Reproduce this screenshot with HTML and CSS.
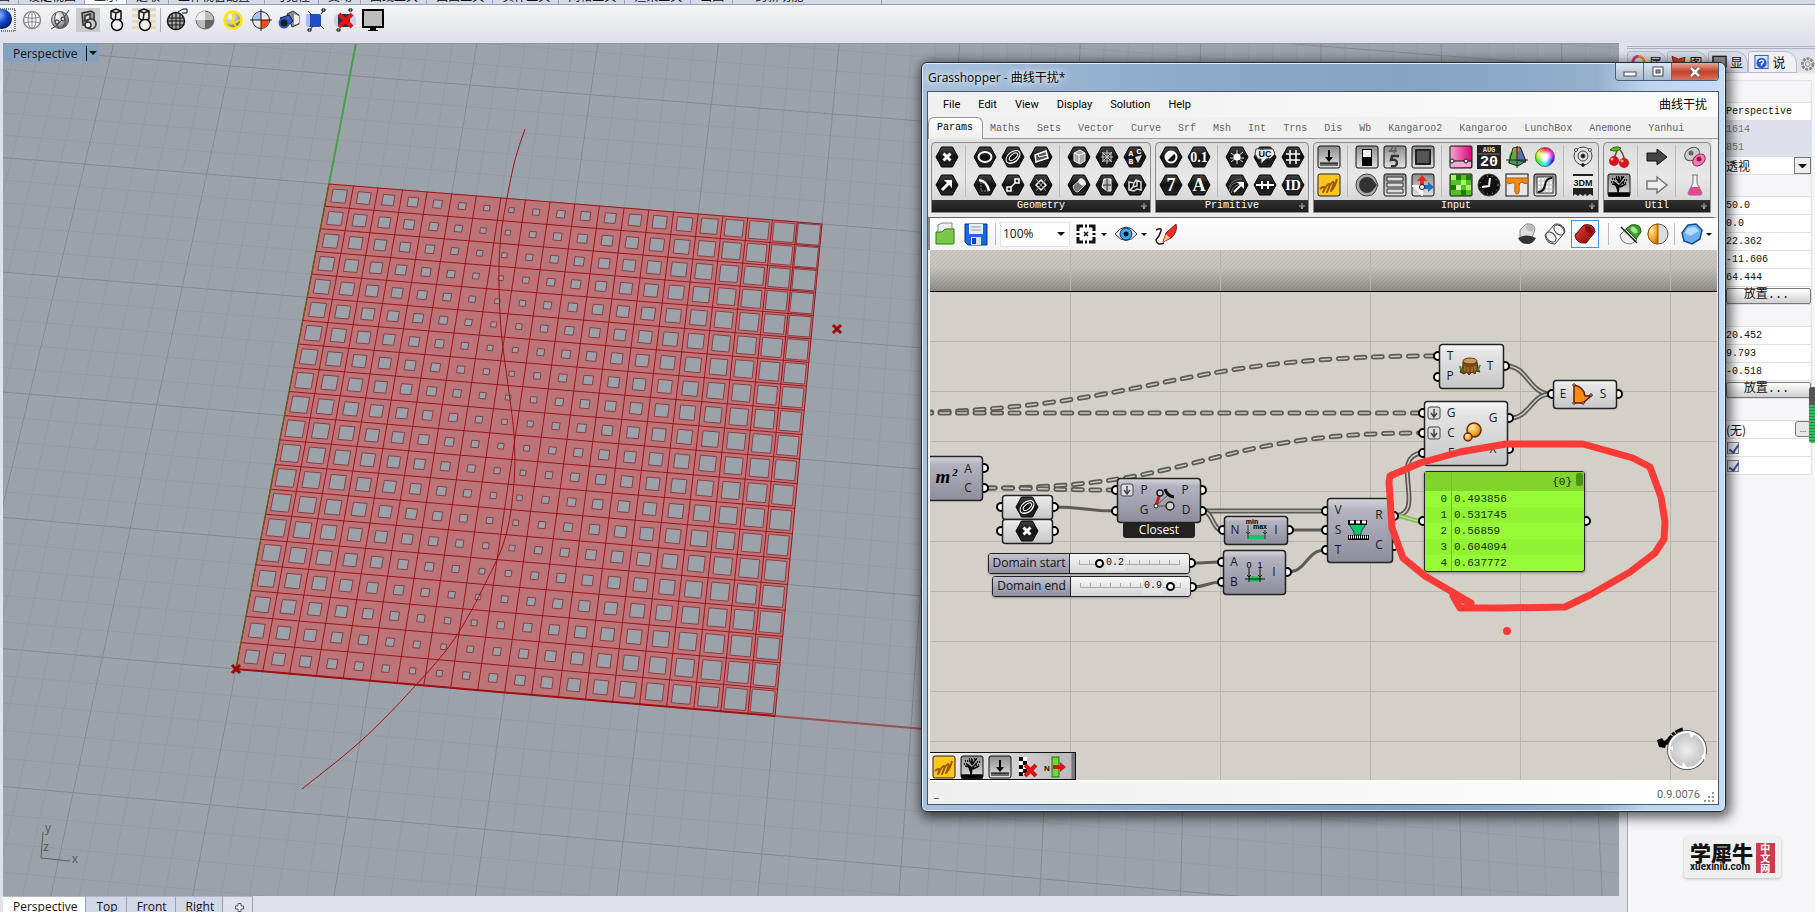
FILE: index.html
```html
<!DOCTYPE html>
<html lang="zh">
<head>
<meta charset="utf-8">
<title>Grasshopper - 曲线干扰</title>
<link rel="stylesheet" href="styles.css">
</head>
<body>
<svg class="defs" width="0" height="0" aria-hidden="true">
  <defs>
    <linearGradient id="gHex" x1="0" y1="0" x2="0" y2="1"><stop offset="0" stop-color="#444"/><stop offset=".5" stop-color="#111"/><stop offset="1" stop-color="#262626"/></linearGradient>
    <linearGradient id="gTile" x1="0" y1="0" x2="0" y2="1"><stop offset="0" stop-color="#8c8c8c"/><stop offset="1" stop-color="#e2e2e2"/></linearGradient>
    <linearGradient id="gPink" x1="0" y1="0" x2="1" y2="0"><stop offset="0" stop-color="#f6a6d0"/><stop offset="1" stop-color="#e0007c"/></linearGradient>
    <linearGradient id="gRed" x1="0" y1="0" x2="1" y2="1"><stop offset="0" stop-color="#f0453a"/><stop offset="1" stop-color="#7d0000"/></linearGradient>
    <radialGradient id="gBall" cx=".35" cy=".3" r=".8"><stop offset="0" stop-color="#fff"/><stop offset=".6" stop-color="#a8a8a8"/><stop offset="1" stop-color="#444"/></radialGradient>
    <radialGradient id="gDial"><stop offset="0" stop-color="#eee"/><stop offset="1" stop-color="#c2c2c2"/></radialGradient>
    <radialGradient id="gBlue" cx=".35" cy=".3" r=".8"><stop offset="0" stop-color="#9fc4ff"/><stop offset=".5" stop-color="#1248d0"/><stop offset="1" stop-color="#04124a"/></radialGradient>
    <radialGradient id="gOrange" cx=".35" cy=".3" r=".8"><stop offset="0" stop-color="#ffe9b0"/><stop offset=".6" stop-color="#f2a92c"/><stop offset="1" stop-color="#b36a00"/></radialGradient>
    <linearGradient id="gLight" x1="0" y1="0" x2="0" y2="1"><stop offset="0" stop-color="#fcfcfc"/><stop offset=".15" stop-color="#e6e6e6"/><stop offset="1" stop-color="#c6c6c6"/></linearGradient>
    <linearGradient id="gDark" x1="0" y1="0" x2="0" y2="1"><stop offset="0" stop-color="#d6d6de"/><stop offset=".18" stop-color="#b3b3c0"/><stop offset="1" stop-color="#8d8c9b"/></linearGradient>
    <symbol id="hex" viewBox="0 0 24 24"><path d="M6.500 2h11l5.500 10-5.500 10h-11L1 12z" fill="url(#gHex)" stroke="#000"/></symbol>
    <symbol id="tile" viewBox="0 0 24 24"><rect x="1" y="1" width="22" height="22" rx="2" fill="url(#gTile)" stroke="#111"/></symbol>
    <symbol id="cross" viewBox="0 0 24 24"><path d="M8.500 8.500l7 7M15.500 8.500l-7 7" stroke="#fff" stroke-width="3"/></symbol>
    <symbol id="loop" viewBox="0 0 24 24"><g fill="none" stroke="#fff" transform="rotate(-40 12 12)"><ellipse cx="12" cy="12" rx="8" ry="5"/><ellipse cx="12.500" cy="12" rx="5" ry="2.500"/><path d="M5 14q6 6 13 1"/></g></symbol>
    <symbol id="bake" viewBox="0 0 24 24"><use href="#tile"/><path d="M11 5h2v7h3l-4 5-4-5h3z"/><path d="M3 18h18M4 18v3m2-3v3m2-3v3m2-3v3m2-3v3m2-3v3m2-3v3m2-3v3m2-3v3" stroke="#000"/></symbol>
    <symbol id="scribble" viewBox="0 0 24 24"><rect x="1" y="1" width="22" height="22" rx="2" fill="#ffc61c" stroke="#222"/><path d="M3 16q3-3 4-2t-1 5q4-8 6-8t-2 8q4-10 6-10t-2 9q4-4 6-12" fill="none" stroke="#9a5a00" stroke-width="2" stroke-linejoin="round"/></symbol>
    <symbol id="tree" viewBox="0 0 24 24"><use href="#tile"/><path d="M2 20h20v3H2zM11 20l1-7-5-4m5 4l5-5m-5 2V4m0 5L9 5m3 5l4-6M5 11l5 1M19 11l-6 3" fill="#000" stroke="#000" stroke-width="1.500"/><path d="M4 9h3M5 6h4M9 4h3M14 4h4M17 7h4M16 10h4" stroke="#111" stroke-width="2" stroke-dasharray="1 1"/></symbol>
    <symbol id="down" viewBox="0 0 14 14"><rect x="1" y="1" width="12" height="12" rx="2" fill="#dcdce0" stroke="#444"/><path d="M7 3v8M4 7l3 4 3-4" fill="none" stroke="#444" stroke-width="1.500"/></symbol>
    <symbol id="plus" viewBox="0 0 8 8"><path d="M4 1v6M1 4h6M3 5l1 2 1-2" stroke="#aaa" fill="none"/></symbol>
    <symbol id="gear" viewBox="0 0 16 16"><circle cx="8" cy="8" r="5.500" fill="#eee" stroke="#888" stroke-width="3" stroke-dasharray="3 1"/><circle cx="8" cy="8" r="2.500" fill="#e2e4ec" stroke="#888"/></symbol>
  </defs>
</svg>

<div class="app">
  <nav class="tabstrip">
    <a href="#">视图</a><a href="#">设定视图</a><a href="#" class="on">显示</a><a href="#">选取</a><a href="#" class="mid6">工作视窗配置</a><a href="#">可见性</a><a href="#">变动</a><a href="#">曲线工具</a><a href="#">曲面工具</a><a href="#">实体工具</a><a href="#">网格工具</a><a href="#">渲染工具</a><a href="#">出图</a><a href="#" class="wide">的新功能</a>
  </nav>
  <div class="toolbar">
    <button aria-label="渲染"><svg viewBox="0 0 24 24"><path d="M0 1h23v22H0" fill="none" stroke="#777" stroke-width="2" stroke-dasharray="1 1"/><circle cx="10" cy="11" r="10" fill="url(#gBlue)"/></svg></button>
    <button aria-label="线框"><svg viewBox="0 0 24 24" fill="none" stroke="#888"><circle cx="12" cy="12" r="8.500" fill="#f4f4f4" stroke-width="1.500"/><ellipse cx="12" cy="12" rx="4" ry="8.500"/><path d="M4 9q8 3 16 0M4 15q8-3 16 0M12 3v18"/></svg></button>
    <button aria-label="着色"><svg viewBox="0 0 24 24"><circle cx="12" cy="12" r="8.500" fill="url(#gBall)" stroke="#555"/><path d="M3 21Q12 17 21 2M8 5q-4 8 3 15M14 4q6 8 1 15" fill="none" stroke="#444"/><circle cx="9" cy="14" r="2" fill="#ddd" stroke="#222"/><circle cx="15" cy="11" r="2" fill="#ddd" stroke="#222"/></svg></button>
    <button aria-label="半透明" class="pressed"><svg viewBox="0 0 24 24" fill="#999" stroke="#333" stroke-width="1.500"><path d="M6 5l9-2 3 2v8l-3 4H7z"/><path d="M9 8l5-2v5l-5 2z" fill="#ddd"/><circle cx="15" cy="16" r="5" fill="#ccc"/><circle cx="12" cy="17" r="3" fill="#eee"/></svg></button>
    <button aria-label="工程图"><svg viewBox="0 0 24 24" fill="#eee" stroke="#111" stroke-width="1.500"><path d="M7 3l5-2 5 2v8l-6 2-4-3zM7 3l5 2 5-2M12 5l-1 8"/><circle cx="13" cy="17" r="5.500"/></svg></button>
    <button aria-label="艺术风格" class="paper"><svg viewBox="0 0 24 24" fill="#eee" stroke="#111" stroke-width="1.500"><path d="M7 3l5-2 5 2v8l-6 2-4-3zM7 3l5 2 5-2M12 5l-1 8"/><circle cx="13" cy="17" r="5.500"/></svg></button>
    <i class="vsep"></i>
    <button aria-label="网格球"><svg viewBox="0 0 24 24" fill="none" stroke="#111"><circle cx="11" cy="13" r="8.500" fill="#aaa" stroke-width="1.500"/><path d="M3 10h16M3 13h17M4 17h14M7 6v14M11 5v17M15 6v15M13 4l5-3h4v4h-5"/></svg></button>
    <button aria-label="平坦着色"><svg viewBox="0 0 24 24"><circle cx="12" cy="12" r="9" fill="#bbb" stroke="#666"/><path d="M12 3v9H3a9 9 0 0 1 9-9z" fill="#eee"/><path d="M12 21v-9h9a9 9 0 0 1-9 9z" fill="#666"/></svg></button>
    <button aria-label="着色选取"><svg viewBox="0 0 24 24"><circle cx="12" cy="12" r="8.500" fill="url(#gBall)" stroke="#ffe600" stroke-width="2.500"/><path d="M13 3q-4 9 3 17M4 14q9 3 16-3" stroke="#ffe600" fill="none" stroke-width="1.500"/></svg></button>
    <button aria-label="斑马纹"><svg viewBox="0 0 24 24"><circle cx="12" cy="12" r="8.500" fill="#e8e8e8" stroke="#222"/><path d="M12 12V4a8 8 0 0 0-8 8z" fill="#9cc4ff"/><path d="M12 12v8a8 8 0 0 0 8-8z" fill="#ff4a10"/><path d="M12 1v22M1 12h22" stroke="#411"/></svg></button>
    <button aria-label="相机"><svg viewBox="0 0 24 24"><path d="M10 6l6-3 6 4v9l-7 3z" fill="#889" stroke="#333"/><path d="M17 6l5 2v7l-5 2z" fill="#eee"/><path d="M3 10l9-3 4 6-7 6z" fill="#3c5fc0" stroke="#114"/><circle cx="7" cy="15" r="4.500" fill="#122" stroke="#3558c0" stroke-width="2"/></svg></button>
    <button aria-label="截平面"><svg viewBox="0 0 24 24"><rect x="1" y="6" width="22" height="13" rx="5" fill="#e4eaf6"/><rect x="3" y="6" width="13" height="13" rx="2" fill="#204cc8"/><rect x="1" y="6" width="4" height="13" rx="2" fill="#a8bcf0"/><path d="M5 22l3-4M16 6l3-4M3 3l4 4M15 17l4 4" stroke="#222"/><path d="M3 21h3v2H3zM17 1h3v2h-3z" fill="#fff" stroke="#000"/></svg></button>
    <button aria-label="停用截平面"><svg viewBox="0 0 24 24"><rect x="1" y="6" width="22" height="13" rx="5" fill="#c8d0e4"/><rect x="5" y="6" width="12" height="13" rx="2" fill="#27304c"/><path d="M6 6l13 13M19 6L6 19" stroke="#ec1010" stroke-width="4"/><path d="M4 21h3v2H4zM16 1h3v2h-3z" fill="#fff" stroke="#000"/></svg></button>
    <button aria-label="屏幕"><svg viewBox="0 0 24 24"><rect x="2" y="2" width="20" height="17" fill="#bdbdbd" stroke="#000" stroke-width="2"/><path d="M9 20h6v2H9zM7 22h10v1H7z"/></svg></button>
  </div>

  <div class="main">
    <div class="work">
      <div class="viewport">
        <svg class="scene" id="scene" aria-label="Perspective"></svg>
        <button class="vlabel">Perspective<i class="bar"></i><i class="tri"></i></button>
      </div>
      <nav class="vtabs"><a href="#" class="on">Perspective</a><a href="#">Top</a><a href="#">Front</a><a href="#">Right</a><a href="#" class="add" aria-label="新增"><svg viewBox="0 0 9 9"><path d="M3 0.500h3V3h2.500v3H6v2.500H3V6H.5V3H3z" fill="#fff" stroke="#555"/></svg></a></nav>
    </div>

    <aside class="side">
      <nav class="ptabs">
        <a href="#"><svg viewBox="0 0 16 16"><circle cx="8" cy="8" r="6" fill="none" stroke="#e89020" stroke-width="3"/><path d="M2 8a6 6 0 0 1 6-6" stroke="#d03a8c" stroke-width="3" fill="none"/><path d="M14 8a6 6 0 0 1-6 6" stroke="#3a8c2c" stroke-width="3" fill="none"/></svg>属</a>
        <a href="#"><svg viewBox="0 0 16 16"><path d="M1 2l7 3 7-2-2 10-9 1z" fill="#e6400c" stroke="#801c00"/></svg>图</a>
        <a href="#"><svg viewBox="0 0 16 16"><rect x="1" y="2" width="14" height="11" fill="#999" stroke="#222" stroke-width="1.500"/></svg>显</a>
        <a href="#" class="on"><svg viewBox="0 0 16 16"><rect x="1" y="1" width="14" height="14" fill="#dde8ff" stroke="#3355aa"/><circle cx="8" cy="9" r="5.500" fill="#2458d8"/><path d="M6 8q0-2 2-2t2 2q0 1-2 2v2" stroke="#fff" fill="none" stroke-width="1.500"/></svg>说</a>
        <svg class="cog" viewBox="0 0 16 16"><use href="#gear"/></svg>
      </nav>
      <div class="pbody">
        <table class="props">
          <tr class="sec"><td></td></tr>
          <tr><td>Perspective</td></tr>
          <tr class="ro"><td>1614</td></tr>
          <tr class="ro"><td>851</td></tr>
          <tr><td><div class="drop"><select aria-label="投影"><option>透视</option></select><i></i></div></td></tr>
          <tr class="sec"><td></td></tr>
          <tr><td>50.0</td></tr><tr><td>0.0</td></tr><tr><td>22.362</td></tr><tr><td>-11.606</td></tr><tr><td>64.444</td></tr>
          <tr><td><button class="place">放置...</button></td></tr>
          <tr class="sec"><td></td></tr>
          <tr><td>20.452</td></tr><tr><td>9.793</td></tr><tr><td>-0.518</td></tr>
          <tr><td><button class="place">放置...</button></td></tr>
          <tr class="sec"><td></td></tr>
          <tr><td><div class="file"><span>(无)</span><button aria-label="浏览">...</button></div></td></tr>
          <tr><td><input type="checkbox" aria-label="显示" checked></td></tr>
          <tr><td><input type="checkbox" aria-label="灰阶" checked></td></tr>
        </table>
        <div class="mark">
          <div><b>学犀牛</b><span>xuexiniu.com</span></div>
          <em>中文网</em>
        </div>
      </div>
    </aside>
  </div>

  <i class="meter"></i>

  <section class="window">
    <header class="title"><h1>Grasshopper - <span>曲线干扰</span>*</h1>
      <div class="wbtns"><button aria-label="最小化"><svg viewBox="0 0 14 12"><rect x="1" y="6" width="12" height="4" fill="#fff" stroke="#445"/></svg></button><button aria-label="最大化"><svg viewBox="0 0 14 12"><rect x="2" y="1" width="10" height="9" fill="#fff" stroke="#445"/><rect x="5" y="4" width="4" height="3" fill="#89a" stroke="#445"/></svg></button><button class="close" aria-label="关闭"><svg viewBox="0 0 14 12"><path d="M3 2l8 8M11 2l-8 8" stroke="#544" stroke-width="4"/><path d="M3 2l8 8M11 2l-8 8" stroke="#fff" stroke-width="2.500"/></svg></button></div>
    </header>
    <div class="inner">
      <nav class="menu"><a href="#">File</a><a href="#">Edit</a><a href="#">View</a><a href="#">Display</a><a href="#">Solution</a><a href="#">Help</a><span>曲线干扰</span></nav>
      <nav class="gtabs"><a href="#" class="on">Params</a><a href="#">Maths</a><a href="#">Sets</a><a href="#">Vector</a><a href="#">Curve</a><a href="#">Srf</a><a href="#">Msh</a><a href="#">Int</a><a href="#">Trns</a><a href="#">Dis</a><a href="#">Wb</a><a href="#">Kangaroo2</a><a href="#">Kangaroo</a><a href="#">LunchBox</a><a href="#">Anemone</a><a href="#">Yanhui</a></nav>
      <div class="ribbon">
        <div class="group">
          <div class="icons">
            <div>
              <svg viewBox="0 0 24 24"><use href="#hex"/><use href="#cross"/></svg>
              <svg viewBox="0 0 24 24"><use href="#hex"/><path d="M7 17l7-7" stroke="#fff" stroke-width="3"/><path d="M9 7h8v8z" fill="#fff"/></svg>
            </div>
            <div>
              <svg viewBox="0 0 24 24"><use href="#hex"/><ellipse cx="12" cy="12" rx="6.500" ry="5" fill="none" stroke="#fff" stroke-width="2"/></svg>
              <svg viewBox="0 0 24 24"><use href="#hex"/><path d="M6 7q8 1 10 11" fill="none" stroke="#fff" stroke-width="2.500"/><path d="M8 9v9h8" fill="none" stroke="#888" stroke-dasharray="2 1"/></svg>
              <svg viewBox="0 0 24 24"><use href="#hex"/><use href="#loop"/></svg>
              <svg viewBox="0 0 24 24"><use href="#hex"/><path d="M8 16l8-8" stroke="#fff" stroke-width="1.500"/><path d="M14 6h4v4h-4zM6 14h4v4H6z" stroke="#fff" fill="#222" stroke-width="1.500"/></svg>
              <svg viewBox="0 0 24 24"><use href="#hex"/><path d="M6 10l11-4 2 7-12 4z" fill="#555" stroke="#fff" stroke-width="1.500"/><path d="M9 9l1 3 8-2" stroke="#fff" fill="none"/></svg>
              <svg viewBox="0 0 24 24"><use href="#hex"/><path d="M12 7l5 5-5 5-5-5z" fill="none" stroke="#fff" stroke-width="1.500"/><path d="M7 6l10 12M17 6L7 18" stroke="#999"/></svg>
            </div>
            <div>
              <svg viewBox="0 0 24 24"><use href="#hex"/><path d="M7 8l6-3 5 3v8l-5 3-6-3z" fill="#aaa" stroke="#eee"/><path d="M7 8l5 2 6-2M12 10v8" stroke="#fff" fill="none"/></svg>
              <svg viewBox="0 0 24 24"><use href="#hex"/><path d="M6 13l8-7 5 5-8 8q-4 0-5-6z" fill="#777" stroke="#ccc"/><ellipse cx="15" cy="9" rx="4" ry="3" transform="rotate(40 15 9)" fill="#eee"/></svg>
              <svg viewBox="0 0 24 24"><use href="#hex"/><path d="M6 12h12M12 5v14M7 7l10 10M17 7L7 17M8 8h8v8H8z" stroke="#ccc" fill="none"/></svg>
              <svg viewBox="0 0 24 24"><use href="#hex"/><path d="M9 6h7v12h-4l-5-4z" fill="#bbb" stroke="#fff"/><path d="M8 12h8M12 6v12" stroke="#333"/></svg>
              <svg viewBox="0 0 24 24"><use href="#hex"/><path d="M12 12l7-2-4 8z" fill="#ddd"/><text x="8" y="11" class="tiny">A</text><text x="16" y="9" class="tiny">C</text><text x="8" y="19" class="tiny">B</text></svg>
              <svg viewBox="0 0 24 24"><use href="#hex"/><path d="M6 9l5 1 2-3 5 2v8l-4-1-3 2-5-1zM11 10l-1 4 4-1v-5M10 14l-3 3" fill="none" stroke="#ddd" stroke-width="1.500"/></svg>
            </div>
          </div>
          <div class="gname">Geometry<svg viewBox="0 0 8 8"><use href="#plus"/></svg></div>
        </div>
        <div class="group">
          <div class="icons">
            <div>
              <svg viewBox="0 0 24 24"><use href="#hex"/><circle cx="12" cy="12" r="5.500" fill="#111" stroke="#fff" stroke-width="2"/><path d="M8 16A5.500 5.500 0 0 1 16 8z" fill="#fff"/></svg>
              <svg viewBox="0 0 24 24"><use href="#hex"/><text x="12" y="18" class="big">7</text></svg>
              <svg viewBox="0 0 24 24"><use href="#hex"/><text x="12" y="17" class="mid">0.1</text></svg>
              <svg viewBox="0 0 24 24"><use href="#hex"/><text x="12" y="18" class="big">A</text></svg>
            </div>
            <div>
              <svg viewBox="0 0 24 24"><use href="#hex"/><path d="M12 5v14M6 8l12 9M18 7L6 17M5 13h14" stroke="#ddd"/><circle cx="12" cy="12" r="3.500" fill="#fff"/></svg>
              <svg viewBox="0 0 24 24"><use href="#hex"/><path d="M4 14q3-8 13-8M4 18q2-10 13-9M6 20q2-9 12-9" fill="none" stroke="#777"/><path d="M9 19l7-7" stroke="#fff" stroke-width="2"/><path d="M12 9h7v7z" fill="#fff"/></svg>
              <svg viewBox="0 0 24 24"><use href="#hex"/><path d="M3 4h17l2 5-5 5h-4l-5 5v-5H5L2 9z" fill="#eee" stroke="#444"/><text x="12" y="12" class="lab">ÜÇ</text></svg>
              <svg viewBox="0 0 24 24"><use href="#hex"/><path d="M3 12h18M9 8v8M15 8v8" stroke="#fff" stroke-width="2"/></svg>
              <svg viewBox="0 0 24 24"><use href="#hex"/><path d="M9 5v14M15 5v14M5 9h14M5 15h14" stroke="#fff" stroke-width="1.500"/></svg>
              <svg viewBox="0 0 24 24"><use href="#hex"/><text x="12" y="17" class="mid">ID</text></svg>
            </div>
          </div>
          <div class="gname">Primitive<svg viewBox="0 0 8 8"><use href="#plus"/></svg></div>
        </div>
        <div class="group">
          <div class="icons">
            <div>
              <svg viewBox="0 0 24 24"><use href="#bake"/></svg>
              <svg viewBox="0 0 24 24"><use href="#scribble"/></svg>
            </div>
            <div>
              <svg viewBox="0 0 24 24"><use href="#tile"/><rect x="7" y="4" width="10" height="17"/><rect x="8" y="5" width="8" height="7" fill="#eee"/></svg>
              <svg viewBox="0 0 24 24"><path d="M12 1a11 11 0 1 0 0 22q5 0 8-4l3-7-3-7q-3-4-8-4z" fill="#aaa" stroke="#444"/><path d="M12 4a8 8 0 1 0 0 16q4 0 6-3l4-5-4-5q-2-3-6-3z" fill="#333"/></svg>
              <svg viewBox="0 0 24 24"><use href="#tile"/><path d="M10 2L7 6h7M13 2l-2 6" stroke="#666" stroke-width="2" fill="none"/><path d="M16 11H9l-1 4q6-1 6 3t-6 3" stroke="#333" stroke-width="2.500" fill="none"/></svg>
              <svg viewBox="0 0 24 24"><use href="#tile"/><path d="M4 4h16v4H4zM4 10h16v4H4zM4 16h16v4H4z" fill="#ddd" stroke="#333"/></svg>
              <svg viewBox="0 0 24 24"><use href="#tile"/><rect x="4" y="4" width="16" height="16" rx="1" fill="#222"/><rect x="6" y="6" width="12" height="12" fill="#555"/></svg>
              <svg viewBox="0 0 24 24"><use href="#tile"/><path d="M1 13h10v10" fill="#eee" stroke="#fff" stroke-width="2"/><path d="M11 12V7" stroke="#e03018" stroke-width="4"/><path d="M6 8l5-6 5 6z" fill="#e03018"/><path d="M13 14h5" stroke="#1770d0" stroke-width="4"/><path d="M17 9l6 5-6 5z" fill="#1770d0"/><circle cx="11" cy="14" r="2.500" fill="#fff" stroke="#111"/></svg>
            </div>
            <div>
              <svg viewBox="0 0 24 24"><rect x="1" y="1" width="22" height="22" rx="1" fill="url(#gPink)" stroke="#111"/><path d="M2 16h20v6H2z" fill="#f7a8d2"/><path d="M1 16h22" stroke="#111"/><circle cx="3" cy="16" r="2" fill="#fff" stroke="#111"/><circle cx="17" cy="16" r="2" fill="#fff" stroke="#111"/></svg>
              <svg viewBox="0 0 24 24"><rect x="1" y="1" width="22" height="22" rx="1" fill="#4fc41a" stroke="#111"/><path d="M2 2h5v5H2zM12 7h5v5h-5zM17 12h5v5h-5z" fill="#a8f070"/><path d="M7 2h5v5H7zM17 2h5v5h-5zM2 12h5v5H2zM12 17h5v5h-5z" fill="#1d7a0a"/><path d="M7 12h5v5H7z" fill="#dcffc0"/></svg>
              <svg viewBox="0 0 24 24"><rect width="24" height="24" fill="#222"/><path d="M1 9h22" stroke="#777"/><text x="12" y="7" class="aug">AUG</text><text x="12" y="21" class="day">20</text></svg>
              <svg viewBox="0 0 24 24"><circle cx="12" cy="12" r="11" fill="#111" stroke="#444"/><circle cx="12" cy="12" r="9" fill="none" stroke="#bbb" stroke-dasharray="1 4"/><path d="M13 5l-1 8-7 1" fill="none" stroke="#fff" stroke-width="2"/></svg>
              <svg viewBox="0 0 24 24"><path d="M5 8l7-4v17l-9-3z" fill="#58b040"/><path d="M8 4l8-2 5 14-7 4z" fill="#c08040"/><path d="M12 6l5-1 4 12-8 3z" fill="#5a70b8"/><path d="M3 17l9-3 8 3-7 4z" fill="#3f9a60"/><path d="M8 3l7-1 6 14-8 5-9-3zM12 1v22M1 15h22M12 15l9 2" stroke="#222" fill="none"/></svg>
              <svg viewBox="0 0 24 24"><rect x="1" y="1" width="22" height="22" fill="#e8e8e8" stroke="#111"/><path d="M1 5h22v5q-3 2-6-1-3 0-3 4 1 8-2 8t-2-8q0-4-3-3-4 2-6-1z" fill="#f08a10" stroke="#b05a00"/></svg>
              <i class="wheel"></i>
              <svg viewBox="0 0 24 24"><use href="#tile"/><rect x="4" y="4" width="16" height="16" fill="#f4f4f4" stroke="#333"/><path d="M8 4v16M12 4v16M16 4v16M4 8h16M4 12h16M4 16h16" stroke="#bbb"/><path d="M5 19q6 0 7-7t7-7" fill="none" stroke="#111" stroke-width="2"/></svg>
            </div>
            <div>
              <svg viewBox="0 0 24 24" fill="none" stroke="#444"><circle cx="12" cy="11" r="9"/><circle cx="12" cy="11" r="5"/><circle cx="12" cy="11" r="2" fill="#111"/><circle cx="5" cy="5" r="1.500" fill="#fff"/><circle cx="19" cy="5" r="1.500" fill="#fff"/><circle cx="12" cy="20" r="1.500" fill="#111"/></svg>
              <svg viewBox="0 0 24 24"><path d="M2 1h20v22l-3-2-3 2-2-2-2 2-3-2-2 2-3-2-2 2z" fill="#222"/><rect x="2" y="3" width="20" height="12" fill="#eee"/><text x="12" y="13" class="dm">3DM</text></svg>
            </div>
          </div>
          <div class="gname">Input<svg viewBox="0 0 8 8"><use href="#plus"/></svg></div>
        </div>
        <div class="group">
          <div class="icons">
            <div>
              <svg viewBox="0 0 24 24"><path d="M11 3Q9 9 7 13M11 3q6 5 6 12" fill="none" stroke="#6a4a10" stroke-width="1.500"/><path d="M3 5q5-5 11-2-4 5-11 2z" fill="#58b82a" stroke="#2a6a10"/><circle cx="7" cy="16" r="5" fill="#d81020"/><circle cx="17" cy="18" r="5" fill="#d81020"/><circle cx="5" cy="14" r="1.500" fill="#ffb0b0"/><circle cx="15" cy="16" r="1.500" fill="#ffb0b0"/></svg>
              <svg viewBox="0 0 24 24"><use href="#tree"/></svg>
            </div>
            <div>
              <svg viewBox="0 0 24 24"><path d="M2 8h10V4l10 8-10 8v-4H2z" fill="#444" stroke="#111"/></svg>
              <svg viewBox="0 0 24 24"><path d="M2 8h10V4l10 8-10 8v-4H2z" fill="#eee" stroke="#777" stroke-width="1.500"/></svg>
            </div>
            <div>
              <svg viewBox="0 0 24 24"><ellipse cx="9" cy="9" rx="8" ry="6" transform="rotate(-35 9 9)" fill="#ccc" stroke="#555"/><circle cx="8" cy="8" r="2.500" fill="#666"/><ellipse cx="16" cy="15" rx="7" ry="5" transform="rotate(-40 16 15)" fill="#f080b0" stroke="#a02060"/><circle cx="16" cy="14" r="2.500" fill="#a01050"/></svg>
              <svg viewBox="0 0 24 24"><path d="M9 2h6M10 2v8L5 20q0 2 2 2h10q2 0 2-2L14 10V2" fill="#f4f4f4" stroke="#777"/><path d="M8 14h8l3 6q0 2-2 2H7q-2 0-2-2z" fill="#e04890"/></svg>
            </div>
          </div>
          <div class="gname">Util<svg viewBox="0 0 8 8"><use href="#plus"/></svg></div>
        </div>
      </div>
      <div class="ctools">
        <button aria-label="打开"><svg viewBox="0 0 24 24"><path d="M5 3l4-2h10v12H5z" fill="#eee" stroke="#888"/><path d="M3 10h6l3-3h9v14q0 1-1 1H3z" fill="#7cc84a" stroke="#2c7a10"/></svg></button>
        <button aria-label="保存" class="save"><svg viewBox="0 0 24 24"><path d="M1 2h22v21H4l-3-3z" fill="#1c68e0" stroke="#0a2c80"/><path d="M5 2h14v10H5z" fill="#e8eef6"/><path d="M7 5h10M7 8h10" stroke="#999"/><path d="M7 15h10v8H7z" fill="#ddd"/><path d="M8 16h4v6H8z" fill="#1448a8"/></svg></button>
        <i class="sp first"></i>
        <div class="zoomsel"><select aria-label="缩放"><option>100%</option></select><i></i></div>
        <button aria-label="缩放范围" class="dd"><svg viewBox="0 0 24 24"><path d="M4 9V4h5M15 4h5v5M20 15v5h-5M9 20H4v-5M11 4h2M11 20h2M4 11v2M20 11v2" fill="none" stroke="#111" stroke-width="3"/><path d="M10 10l4 4M14 10l-4 4" stroke="#111" stroke-width="1.500"/></svg></button>
        <button aria-label="命名视图" class="dd"><svg viewBox="0 0 24 24"><path d="M1 12q11-14 22 0-11 13-22 0z" fill="#f4f8fa" stroke="#333"/><circle cx="12" cy="12" r="6" fill="#3cace8" stroke="#125"/><circle cx="12" cy="12" r="2.500" fill="#012"/></svg></button>
        <button aria-label="草图"><svg viewBox="0 0 24 24"><path d="M2 8q6-3 5 1t-5 9q1 6 8 3" fill="none" stroke="#3a1010" stroke-width="1.500"/><path d="M9 20l3-9L22 2q2 8-5 14z" fill="#e83028" stroke="#8a1010"/><path d="M9 20l3-8 4 4z" fill="#f2c080"/></svg></button>
        <span class="grow"></span>
        <button aria-label="不预览"><svg viewBox="0 0 24 24"><path d="M5 8l6-6q8-1 9 5l-3 9-6 3-6-3z" fill="#ddd" stroke="#888"/><ellipse cx="15" cy="6" rx="4" ry="3" transform="rotate(30 15 6)" fill="#bbb"/><path d="M3 16q9-5 18 0-3 6-9 6t-9-6z" fill="#333"/></svg></button>
        <button aria-label="线框预览"><svg viewBox="0 0 24 24" fill="#f4f4f4" stroke="#444"><path d="M2 13L12 2q9-1 10 8L12 22Q3 22 2 13z"/><ellipse cx="16" cy="8" rx="6" ry="4" transform="rotate(45 16 8)"/><ellipse cx="8" cy="15" rx="6" ry="4" transform="rotate(45 8 15)"/></svg></button>
        <button aria-label="着色预览" class="sel"><svg viewBox="0 0 24 24"><path d="M2 13L11 3q10-2 11 7L13 21Q3 22 2 13z" fill="url(#gRed)" stroke="#500"/><ellipse cx="16" cy="8" rx="5" ry="3" transform="rotate(45 16 8)" fill="#8a0c08"/></svg></button>
        <i class="sp far"></i>
        <button aria-label="仅选中预览"><svg viewBox="0 0 24 24"><path d="M2 13l6-6 11 11-6 4Q3 22 2 13z" fill="#eee" stroke="#777"/><path d="M8 7l5-4q10-2 10 7l-5 7z" fill="#3ca028" stroke="#1a5a10"/><ellipse cx="16" cy="8" rx="4" ry="2.500" transform="rotate(45 16 8)" fill="#a8e890"/><path d="M3 5l16 16" stroke="#111" stroke-width="1.500"/></svg></button>
        <button aria-label="材质"><svg viewBox="0 0 24 24"><circle cx="12" cy="12" r="10" fill="#ddd" stroke="#555"/><path d="M12 2a10 10 0 0 0 0 20z" fill="url(#gOrange)" stroke="#a85a00"/></svg></button>
        <i class="sp near"></i>
        <button aria-label="网格质量" class="dd"><svg viewBox="0 0 24 24"><path d="M9 3l8-1 6 6-2 9-8 5-8-3-2-8z" fill="#68b0f0" stroke="#1c4a8c" stroke-width="1.500"/><path d="M8 6l8-1 4 4-9 5-5-3z" fill="#b4daff"/></svg></button>
      </div>
      <div class="canvas">
        <svg class="wires"><g transform="translate(-930 -250)" id="graph"></g></svg>
        <label class="slider s1"><span>Domain start</span><b><input type="range" min="0" max="1" step="0.1" value="0.2"><output>0.2</output></b></label>
        <label class="slider s2"><span>Domain end</span><b><input type="range" min="0" max="1" step="0.1" value="0.9"><output>0.9</output></b></label>
        <table class="panel">
          <tr><th></th><th>{0}</th></tr>
          <tr><td>0</td><td>0.493856</td></tr>
          <tr><td>1</td><td>0.531745</td></tr>
          <tr><td>2</td><td>0.56859</td></tr>
          <tr><td>3</td><td>0.604094</td></tr>
          <tr><td>4</td><td>0.637772</td></tr>
        </table>
        <i class="nub"></i>
        <svg class="wires over"><g transform="translate(-930 -250)">
          <g fill="none" stroke="#fb3b37" stroke-width="7" stroke-linejoin="round" stroke-linecap="round"><path d="M1471 603L1453 596l7 12 41 0 64-1 25-12 40-23 25-19 9-14 1-17-4-25-11-30-17-9-50-14h-77l-46 8-40 11-30 13-1 6 3 46 11 30 22 18z"/></g>
          <circle cx="1507" cy="631" r="4" fill="#fb3b37"/>
          <g><path d="M1668 743q4-10 15-13" fill="none" stroke="#000" stroke-width="5" stroke-dasharray="8 1 3 1"/><path d="M1657 740l5-2 2 3 5-3 1 6-4 1-1 3-6-1z" fill="#000"/><circle cx="1687" cy="750" r="20" fill="#555"/><circle cx="1687" cy="750" r="18" fill="url(#gDial)" stroke="#fff" stroke-width="2"/><path d="M1689 732l6 2-4 4zM1706 754l-5 2 4 4zM1681 768l2-6 4 5zM1668 748l5-2 0 5z" fill="#fff"/></g>
        </g></svg>
        <div class="dock">
          <button aria-label="草图"><svg viewBox="0 0 24 24"><use href="#scribble"/></svg></button>
          <button aria-label="图表"><svg viewBox="0 0 24 24"><use href="#tree"/></svg></button>
          <button aria-label="烘焙"><svg viewBox="0 0 24 24"><use href="#bake"/></svg></button>
          <button aria-label="清除"><svg viewBox="0 0 24 24"><rect x="3" y="2" width="8" height="18" fill="#fff"/><path d="M3 2h4v4H3zM7 6h4v4H7zM3 10h4v4H3zM7 14h4v4H7zM3 17h4v4H3z"/><path d="M9 10l11 11M20 10L9 21" stroke="#d81414" stroke-width="4"/></svg></button>
          <button aria-label="导航"><svg viewBox="0 0 24 24"><text x="3" y="16" class="nn">N</text><rect x="8" y="2" width="7" height="20" fill="#78d820" stroke="#264"/><path d="M9 10h7V7l6 5-6 5v-3H9z" fill="#d81414"/></svg></button>
        </div>
      </div>
      <footer class="status"><span>_</span><span>0.9.0076</span><svg viewBox="0 0 12 12" fill="#999"><path d="M8 1h2v2H8zM8 5h2v2H8zM8 9h2v2H8zM4 5h2v2H4zM4 9h2v2H4zM0 9h2v2H0z"/></svg></footer>
    </div>
  </section>
</div>
<script src="scene.js"></script>
</body>
</html>
```

FILE: styles.css
```css
* { box-sizing: border-box; }
body { margin: 0; font-family: "Open Sans", "Noto Sans CJK SC", sans-serif; font-size: 12px; color: #111; }
a { color: inherit; text-decoration: none; }
button { border: 0; padding: 0; background: none; font: inherit; color: inherit; display: block; }
i { font-style: normal; display: block; flex: none; }
.defs { position: absolute; }
.app { position: relative; height: 100vh; overflow: hidden; display: flex; flex-direction: column; background: #dfe2ea; }

.tabstrip { flex: none; height: 5px; overflow: hidden; display: flex; align-items: flex-end; background: #d5d9e8; border-bottom: 1px solid #96a0b4; padding-right: 4px; }
.tabstrip a { flex: none; font: 12px/16px "Noto Sans CJK SC", sans-serif; padding: 0 8px 0 9px; border-right: 1px solid #98a2b6; height: 16px; }
.tabstrip a:first-child { margin-left: -23px; }
.tabstrip .on { background: #fafbfd; }
.tabstrip .mid6 { padding-right: 14px; }
.tabstrip .wide { padding: 0 78px 0 22px; }

.toolbar { flex: none; height: 38px; display: flex; padding: 3px 0 0; gap: 4px; background: linear-gradient(#f4f5f7, #dcdfe8); margin-left: -8px; }
.toolbar svg { display: block; width: 24px; height: 24px; }
.toolbar button { height: 24px; }
.toolbar .pressed { background: #c9cacd; }
.toolbar .paper { background: repeating-linear-gradient(#e0d8c8 0 3px, #efeae0 3px 6px); }
.vsep { width: 1px; height: 24px; background: #aaa; }

.main { flex: 1; display: flex; min-height: 0; }
.work { flex: 1; min-width: 0; display: flex; flex-direction: column; padding: 0 8px 0 3px; }
.viewport { flex: 1; position: relative; min-height: 0; background: #9ca2aa; border-top: 1px solid #8f979f; }
.scene { position: absolute; inset: 0; width: 100%; height: 100%; }
.vlabel { position: relative; display: flex; align-items: center; height: 18px; width: 96px; padding-left: 10px; background: #86a1c0; font-size: 12px; }
.bar { width: 1px; height: 15px; background: #111; margin: 0 2px 0 auto; }
.tri { border: 4px solid transparent; border-top-color: #111; border-bottom: 0; margin-right: 2px; }
.vtabs { flex: none; height: 16px; overflow: hidden; display: flex; }
.vtabs a { padding: 0 8px 0 10px; line-height: 20px; background: #d3d8e8; border-right: 1px solid #98a0b4; border-top: 1px solid #b4b8c4; }
.vtabs .on { background: #fff; }
.vtabs .add { background: none; padding: 6px 8px 0 12px; }
.add svg { display: block; width: 9px; height: 9px; }

.side { flex: none; width: 188px; display: flex; flex-direction: column; border-top: 3px double #aab0c0; margin-top: 3px; }
.ptabs { height: 24px; flex: none; display: flex; padding: 2px 0 0; font: 13px/18px "Noto Sans CJK SC", sans-serif; }
.ptabs a { display: flex; width: 42px; gap: 3px; padding-left: 3px; border: 1px solid #b4bac8; border-radius: 3px 12px 0 0; background: #d8dcea; align-items: center; }
.ptabs a.on { background: #eef0f6; width: 50px; padding-left: 5px; }
.ptabs svg { width: 15px; height: 16px; }
.ptabs .cog { width: 16px; height: 16px; margin: 5px 0 0 3px; }
.pbody { flex: 1; background: #f6f6f9; border-left: 1px solid #a0a6b8; padding: 7px 3px 0 98px; position: relative; }
.props { width: 100%; border-collapse: collapse; border-right: 1px solid #dfe1ea; border-top: 1px solid #dfe1ea; font: 10px/17px "Liberation Mono", "Noto Sans CJK SC", monospace; }
.props tr { height: 18px; background: #fff; border-bottom: 1px solid #dcdee8; }
.props .sec { height: 22px; background: #f6f6f9; }
.props .ro { background: #dfe1ea; color: #777; }
.props td { padding: 0; height: 17px; line-height: 17px; }
.drop, .file { display: flex; height: 17px; }
.drop select, .zoomsel select { appearance: none; border: 0; background: none; padding: 0; margin: 0; flex: 1; min-width: 0; color: #111; }
.drop select { font: 12px/17px "Noto Sans CJK SC", sans-serif; height: 17px; }
.drop i { width: 17px; border: 1px solid #777; background: #eee; }
.drop i::after { content: ""; display: block; margin: 6px 3px; border: 4px solid transparent; border-top-color: #111; border-bottom: 0; }
.place { width: 100%; height: 16px; border: 1px solid #777; border-radius: 2px; background: linear-gradient(#fff, #cfcfd2); font: 12px/13px "Liberation Mono", "Noto Sans CJK SC", monospace; padding-right: 4px; }
.file span { flex: 1; font: 12px/17px "Noto Sans CJK SC", sans-serif; }
.file button { width: 16px; height: 16px; border: 1px solid #777; border-radius: 3px; background: #e8e8ea; font: 8px/10px "Open Sans", sans-serif; }
.props input { appearance: none; display: block; width: 12px; height: 12px; margin: 0 1px; border: 1px solid #888; background: #eef0f6; }
.props input::after { content: ""; display: block; width: 4px; height: 8px; margin: 0 0 0 3px; border: solid #3a4fa0; border-width: 0 2px 2px 0; transform: rotate(35deg); }
.mark { position: absolute; right: 34px; bottom: 34px; width: 97px; height: 41px; padding: 6px; border-radius: 3px; background: #efeff0; box-shadow: 0 1px 3px #bbb; display: flex; gap: 3px; }
.mark div { width: 64px; }
.mark b { display: block; font: 900 21px/18px "Noto Sans CJK SC", sans-serif; white-space: nowrap; }
.mark span { display: block; font: bold 10px/12px Roboto, sans-serif; white-space: nowrap; }
.mark em { width: 19px; height: 30px; padding: 0 4px; background: #cf3a4e; color: #fff; font: bold 10px/10px "Noto Sans CJK SC", sans-serif; }
.meter { position: absolute; right: 0; top: 387px; width: 6px; height: 56px; border-radius: 3px 0 0 3px; background: linear-gradient(#555 0 18px, transparent 18px), repeating-linear-gradient(#2ec060 0 2px, #3a7a50 2px 3px); }

.window { position: absolute; left: 921px; right: 89px; top: 62px; bottom: 100px; border: 1px solid #222c38; border-radius: 6px; background: linear-gradient(90deg, #a8c0da, #8fabcb 30%, #86a3c4 60%, #95afcc 84%, #bcd4ee 90%, #c4dcf4); box-shadow: inset 0 0 0 1px #e0ecf8, 2px 3px 12px 3px rgba(0,0,0,.6); padding: 0 6px 6px 5px; display: flex; flex-direction: column; }
.title { flex: none; height: 28px; display: flex; justify-content: space-between; }
.title h1 { margin: 0; padding: 6px 0 0 1px; font: 12px/18px "Open Sans", "Noto Sans CJK SC", sans-serif; color: #000; text-shadow: 0 0 6px #fff, 0 0 8px #fff; }
.wbtns { display: flex; height: 18px; border: 1px solid #4c5e74; border-top: 0; border-radius: 0 0 4px 4px; overflow: hidden; }
.wbtns button { width: 28px; background: linear-gradient(#dbe6f2, #a4b8ce); border-right: 1px solid #5c6e84; }
.wbtns .close { width: 46px; border: 0; background: linear-gradient(#e8a898, #c4402c 50%, #d8705c); }
.wbtns svg { display: block; width: 14px; height: 12px; margin: 2px auto; }
.inner { flex: 1; min-height: 0; display: flex; flex-direction: column; border: 1px solid #46586e; background: #f0f0f0; }
.menu { flex: none; height: 25px; display: flex; align-items: center; gap: 18px; padding: 1px 11px 0 15px; background: linear-gradient(90deg, #f0f0f0, #fcfcfc); font: 11px/24px Roboto, "Noto Sans CJK SC", sans-serif; color: #000; }
.menu span { margin-left: auto; font-size: 12px; }
.gtabs { flex: none; height: 22px; display: flex; border-bottom: 1px solid #999; font: 10px/23px "Liberation Mono", monospace; color: #666; }
.gtabs a { margin-right: 17px; }
.gtabs .on { height: 22px; line-height: 19px; margin-right: 7px; padding: 0 9px 0 8px; color: #000; border: 1px solid #999; border-bottom: 0; border-radius: 6px 6px 0 0; background: linear-gradient(#fff, #eee); }
.ribbon { flex: none; height: 79px; display: flex; gap: 4px; padding: 3px 0 0 3px; background: linear-gradient(#e2e2e2, #eaeaea); border-bottom: 1px solid #666; border-right: 6px solid #eee; }
.group { height: 71px; border: 1px solid #8a8a8a; border-radius: 4px 4px 0 0; background: linear-gradient(#dcdcdc, #e8e8e8 50%, #cccccc); display: flex; flex-direction: column; justify-content: space-between; }
.icons { display: flex; gap: 14px; padding: 2px 3px 0; }
.icons div { display: grid; grid-template-rows: 24px 24px; grid-auto-flow: column; grid-auto-columns: 24px; gap: 4px; position: relative; }
.icons div + div::before { content: ""; position: absolute; left: -8px; top: 0; bottom: 0; width: 1px; background: #bbb; }
.icons svg { width: 24px; height: 24px; display: block; }
.wheel { width: 20px; height: 20px; margin: 2px; border-radius: 50%; border: 1px solid #666; background: radial-gradient(#fff 20%, transparent 70%), conic-gradient(red, #f0f, blue, cyan, lime, yellow, red); }
.gname { height: 12px; background: linear-gradient(#333, #1c1c1c); color: #fff; font: 10px/11px "Liberation Mono", monospace; text-align: center; position: relative; }
.gname svg { position: absolute; right: 2px; top: 2px; width: 8px; height: 8px; }
svg text { text-anchor: middle; }
.tiny { font: bold 8px "Liberation Mono", monospace; fill: #fff; }
.big { font: bold 18px "Liberation Serif", serif; fill: #fff; }
.mid { font: bold 14px "Liberation Serif", serif; fill: #fff; }
.lab { font: bold 9px "Liberation Sans", sans-serif; fill: #111; }
.aug { font: bold 7px "Liberation Mono", monospace; fill: #ddd; }
.day { font: bold 15px "Liberation Mono", monospace; fill: #fff; }
.dm { font: bold 9px "Liberation Sans", sans-serif; fill: #111; }
.nn { font: bold 8px "Liberation Sans", sans-serif; fill: #111; }

.ctools { flex: none; height: 32px; display: flex; align-items: center; gap: 4px; padding: 0 3px; background: linear-gradient(#fff, #f2f2f2); border-left: 2px solid #888; }
.ctools svg { display: block; width: 24px; height: 24px; }
.ctools .save { margin-left: 3px; }
.ctools .sp { width: 1px; height: 22px; background: #bbb; }
.ctools .first { margin-left: 3px; }
.ctools .far { margin: 0 5px; }
.grow { flex: 1; }
.ctools .dd { display: flex; align-items: center; gap: 3px; }
.dd::after { content: ""; border: 3px solid transparent; border-top-color: #111; border-bottom: 0; margin-right: 3px; }
.ctools .sel { width: 28px; height: 28px; padding: 1px; border: 1px solid #3a96f0; background: #f6faff; }
.zoomsel { display: flex; align-items: center; width: 70px; height: 25px; border: 1px solid #e0e2ea; background: #fff; padding: 0 4px 0 2px; }
.zoomsel select { font: 12px/20px "Open Sans", sans-serif; }
.zoomsel i { border: 4px solid transparent; border-top-color: #111; border-bottom: 0; }

.canvas { flex: 1; min-height: 0; position: relative; overflow: hidden; margin: 0 1px 0 2px; background-color: #d4d0c8; }
.wires { position: absolute; inset: 0; width: 100%; height: 100%; }
.node { font: 12px "Open Sans", sans-serif; fill: #1a1a1a; }
.slider { position: absolute; height: 21px; display: flex; border: 1px solid #222; border-radius: 3px; background: linear-gradient(#f8f8f8, #d4d4d4); box-shadow: 0 1px 2px rgba(0,0,0,.3); font: 12px/18px "Open Sans", sans-serif; }
.slider span { flex: none; text-align: center; background: linear-gradient(#c4c4d0, #8f8e9e); border-right: 1px solid #222; border-radius: 2px 0 0 2px; }
.slider b { flex: 1; position: relative; font-weight: normal; }
.s1 { left: 58px; top: 303px; width: 202px; }
.s1 span { width: 81px; }
.s2 { left: 62px; top: 326px; width: 199px; }
.s2 span { width: 78px; }
.slider input { appearance: none; display: block; width: 109px; height: 19px; margin: 0 0 0 5px; background: repeating-linear-gradient(90deg, #aaa 0 1px, transparent 1px 10px) 4px 6px / 101px 5px no-repeat, linear-gradient(#aaa, #aaa) 4px 10px / 101px 1px no-repeat; }
.slider input::-webkit-slider-thumb { appearance: none; width: 9px; height: 9px; border: 2px solid #000; border-radius: 50%; background: #fff; }
.slider output { position: absolute; top: 1px; left: 35px; padding: 0 1px; font: 10px/16px "Liberation Mono", monospace; height: 16px; background: #e4e4e4; }
.s2 output { left: 72px; }
.panel { position: absolute; left: 494px; top: 221px; width: 161px; height: 101px; border: 1px solid #223; border-radius: 3px; border-spacing: 0; background: #98fb38; font: 11px/17px "Liberation Mono", monospace; color: #143000; box-shadow: 0 1px 3px rgba(0,0,0,.4); }
.panel th, .panel td { padding: 0; height: 16px; line-height: 16px; font-weight: normal; }
.panel th { height: 19px; background: #80d42c; text-align: right; padding-right: 12px; }
.panel tr > :first-child { width: 27px; text-align: right; padding-right: 4px; border-right: 1px solid #74c228; }
.panel td + td { padding-left: 2px; }
.panel tr:nth-child(odd) td { background: #90f232; }
.nub { position: absolute; left: 646px; top: 223px; width: 7px; height: 13px; border-radius: 2px 2px 3px 3px; background: #4c9418; }
.dock { position: absolute; left: 0; bottom: 0; height: 28px; display: flex; gap: 4px; padding: 1px 7px 0 2px; border: 1px solid #111; border-left: 0; background: linear-gradient(90deg, #f4f4f4, #bbb 97%, #777 98%); }
.dock svg { display: block; width: 24px; height: 24px; }
.status { flex: none; height: 24px; display: flex; align-items: center; gap: 4px; padding: 4px 2px 0 6px; border-top: 2px solid #fff; background: linear-gradient(90deg, #eee, #fff); font: 11px/20px Roboto, sans-serif; color: #666; }
.status span:first-child { flex: 1; color: #457; }
.status svg { width: 12px; height: 12px; margin-top: 4px; }
```

FILE: scene.js
```js
const NS = 'http://www.w3.org/2000/svg';

/* Perspective viewport: plane coordinates run 0..1 across the 20 x 20 surface. */
const BL = [236, 669], BR = [775, 716], TR = [822, 224], TL = [329, 184];
const d1 = [BR[0] - TR[0], BR[1] - TR[1]], d2 = [TL[0] - TR[0], TL[1] - TR[1]];
const s = [BL[0] - BR[0] + TR[0] - TL[0], BL[1] - BR[1] + TR[1] - TL[1]];
const den = d1[0] * d2[1] - d2[0] * d1[1];
const g = (s[0] * d2[1] - d2[0] * s[1]) / den;
const h = (d1[0] * s[1] - s[0] * d1[1]) / den;
const a = BR[0] - BL[0] + g * BR[0], b = TL[0] - BL[0] + h * TL[0];
const d = BR[1] - BL[1] + g * BR[1], e = TL[1] - BL[1] + h * TL[1];

function project(u, v) {
  const w = g * u + h * v + 1;
  return [(a * u + b * v + BL[0]) / w, (d * u + e * v + BL[1]) / w];
}
function unproject(x, y) {
  const m = a - g * x, n = b - h * x, o = d - g * y, p = e - h * y;
  const q = m * p - n * o, rx = x - BL[0], ry = y - BL[1];
  return [(rx * p - n * ry) / q, (m * ry - rx * o) / q];
}
const pt = p => p[0].toFixed(1) + ' ' + p[1].toFixed(1);
const line = (p, q) => 'M' + pt(p) + 'L' + pt(q);
const poly = ps => 'M' + ps.map(pt).join('L') + 'Z';

let minor = '', major = '';
for (let i = -40; i <= 80; i++) {
  const seg = line(project(i / 20, -2), project(i / 20, 3)) + line(project(-2, i / 20), project(4, i / 20));
  if (i % 5) minor += seg; else major += seg;
}

const knots = [[525, 129], [515, 160], [507, 198], [501, 235], [499, 274], [501, 329], [508, 385], [514, 435], [514, 482], [506, 535], [487, 580], [455, 638], [416, 685], [362, 740], [302, 789]];
const samples = [];
for (let i = 0; i < knots.length - 1; i++) {
  const p0 = knots[Math.max(i - 1, 0)], p1 = knots[i], p2 = knots[i + 1], p3 = knots[Math.min(i + 2, knots.length - 1)];
  for (let t = 0; t < 1; t += 0.1) {
    samples.push([0, 1].map(k => 0.5 * (2 * p1[k] + (p2[k] - p0[k]) * t + (2 * p0[k] - 5 * p1[k] + 4 * p2[k] - p3[k]) * t * t + (3 * p1[k] - p0[k] - 3 * p2[k] + p3[k]) * t * t * t)));
  }
}
const plane = samples.map(p => unproject(p[0], p[1]));

const cells = [];
for (let i = 0; i < 20; i++) for (let j = 0; j < 20; j++) {
  const u = (i + 0.5) / 20, v = (j + 0.5) / 20;
  cells.push({ u, v, dist: Math.min(...plane.map(p => Math.hypot(p[0] - u, p[1] - v))) });
}
const lo = Math.min(...cells.map(c => c.dist)), hi = Math.max(...cells.map(c => c.dist));
let fill = '', holes = '', seams = '';
const square = (u, v, r) => poly([project(u - r, v - r), project(u + r, v - r), project(u + r, v + r), project(u - r, v + r)]);
for (const c of cells) {
  const k = 0.2 + 0.7 * (c.dist - lo) / (hi - lo);
  const inner = square(c.u, c.v, 0.025 * k);
  fill += inner;
  holes += inner;
}
for (let i = 0; i <= 20; i++) seams += line(project(i / 20, 0), project(i / 20, 1)) + line(project(0, i / 20), project(1, i / 20));
fill += poly([project(0, 0), project(1, 0), project(1, 1), project(0, 1)]);
const mark = (x, y) => `<path d="M${x - 4} ${y - 4}l8 8m0-8l-8 8" stroke="#a00000" stroke-width="3"/>`;
document.getElementById('scene').innerHTML = `<g transform="translate(-3 -44)" fill="none">
  <path d="${minor}" stroke="#949ba3"/><path d="${major}" stroke="#868790"/>
  <path d="${line(project(0, 0), project(0, 2))}" stroke="#46a046" stroke-width="2"/>
  <path d="${line(project(1, 0), project(4, 0))}" stroke="#9c5054" stroke-width="2"/>
  <path d="${fill}" fill="#bd7478" fill-rule="evenodd"/>
  <path d="${seams}" stroke="#a0141a"/><path d="${holes}" stroke="#8e3c42"/>
  <path d="${line(project(0, 0), project(0, 1))}" stroke="#6c5a20"/>
  <path d="${line(project(0, 0), project(1, 0))}" stroke="#a01014" stroke-width="2"/>
  <path d="M${samples.map(pt).join('L')}" stroke="#a01014"/>
  ${mark(236, 669)}${mark(837, 329)}
  <path d="M43 832l-2 26 29 3" stroke="#5c5c5c"/>
  <g fill="#555" font-family="Open Sans, sans-serif" font-size="12"><text x="48" y="832">y</text><text x="46" y="851">z</text><text x="75" y="863">x</text></g>
</g>`;

/* Definition canvas: grid, wires and components. */
let out = '', lines = '';
for (let x = 1070; x < 2400; x += 150) lines += `M${x}.5 250v1000`;
for (let y = 341; y < 1200; y += 50) lines += `M930 ${y}.5h2000`;
out += `<defs><pattern id="hatch" width="4" height="4" patternUnits="userSpaceOnUse"><path d="M0 4L4 0" stroke="#c6c2ba" stroke-width="1"/></pattern>
<linearGradient id="shade" x1="0" y1="0" x2="0" y2="1"><stop offset="0" stop-color="#555" stop-opacity=".06"/><stop offset=".4" stop-color="#555" stop-opacity=".1"/><stop offset="1" stop-color="#444" stop-opacity=".5"/></linearGradient></defs>
<rect x="930" y="250" width="2000" height="41" fill="url(#hatch)"/><rect x="930" y="250" width="2000" height="41" fill="url(#shade)"/>
<path d="${lines}" stroke="#b7b4ad"/><path d="M930 291.500h2000" stroke="#000"/>`;

function wire(x1, y1, x2, y2, kind, color = '#5c5b57') {
  const m = (x1 + x2) / 2, p = `M${x1} ${y1}C${m} ${y1} ${m} ${y2} ${x2} ${y2}`;
  if (kind === 'single') return `<path d="${p}" fill="none" stroke="${color}" stroke-width="3"/>`;
  const dash = kind === 'dash' ? 'stroke-dasharray="9 8.500" stroke-linecap="round"' : '';
  return `<g fill="none" ${dash}><path d="${p}" stroke="${color}" stroke-width="5"/><path d="${p}" stroke="#cdc9c1" stroke-width="1.500"/></g>`;
}
out += wire(870, 413, 1436, 356, 'dash') + wire(870, 413, 1421, 413, 'dash') + wire(986, 488, 1421, 433, 'dash') + wire(986, 488, 1115, 490, 'dash');
out += wire(1055, 507, 1115, 511, 'single') + wire(1203, 511, 1325, 511, 'double') + wire(1203, 511, 1222, 530, 'double') + wire(1290, 530, 1325, 530, 'single');
out += wire(1193, 563, 1221, 562, 'single') + wire(1193, 587, 1221, 582, 'single') + wire(1288, 572, 1325, 550, 'single');
out += '<g fill="none"><path d="M1395 516C1428 514 1388 456 1422 453" stroke="#5c5b57" stroke-width="5"/><path d="M1395 516C1428 514 1388 456 1422 453" stroke="#cdc9c1" stroke-width="1.500"/></g>';
out += wire(1396, 516, 1422, 521, 'double', '#80c040') + wire(1506, 366, 1551, 394, 'double') + wire(1510, 418, 1551, 394, 'double');

const port = (x, y) => `<circle cx="${x}" cy="${y}" r="4" fill="#fff" stroke="#000" stroke-width="2"/>`;
const text = (x, y, t) => `<text x="${x}" y="${y + 4}" class="node">${t}</text>`;
function node(x, y, w, ht, tone, ports, labels, icon = '') {
  return ports.map(p => port(...p)).join('') +
    `<rect x="${x}.5" y="${y}.5" width="${w}" height="${ht}" rx="3" fill="url(#${tone})" stroke="#222" stroke-width="1.500"/>` +
    labels.map(l => text(...l)).join('') + icon;
}
const use = (id, x, y, n) => `<use href="#${id}" x="${x}" y="${y}" width="${n}" height="${n}"/>`;
out += node(900, 456, 82, 44, 'gDark', [[984, 468], [984, 488]], [[968, 469, 'A'], [968, 488, 'C']],
  '<text x="943" y="483" font-family="Liberation Serif" font-size="19" font-weight="bold" font-style="italic">m</text><text x="955" y="476" font-family="Liberation Serif" font-size="11" font-weight="bold" font-style="italic">2</text>');
out += node(1002, 495, 50, 24, 'gLight', [[1001, 507], [1054, 507]], [], use('hex', 1015, 495, 24) + use('loop', 1015, 495, 24));
out += node(1002, 519, 50, 24, 'gLight', [[1001, 531], [1054, 531]], [], use('hex', 1015, 519, 24) + use('cross', 1015, 519, 24));
out += '<rect x="1123" y="522" width="72" height="16" rx="3" fill="#222"/>';
out += node(1117, 478, 83, 44, 'gDark', [[1116, 490], [1116, 511], [1202, 490], [1202, 511]], [[1144, 490, 'P'], [1144, 510, 'G'], [1185, 490, 'P'], [1186, 510, 'D']],
  use('down', 1120, 483, 14) + '<path d="M1156 505l4-11" stroke="#d01818" stroke-width="3"/><path d="M1156 506h10m-8-2l10-9" stroke="#555"/><g fill="#ccc" stroke="#222" stroke-width="1.500"><circle cx="1160" cy="493" r="3"/><circle cx="1170" cy="506" r="4"/></g><path d="M1165 489q2 7 9 8" stroke="#111" stroke-width="3" fill="none"/><circle cx="1156" cy="506" r="2" fill="#fff" stroke="#111"/>');
out += '<text x="1159" y="534" class="node" style="fill:#fff">Closest</text>';
out += node(1224, 516, 63, 28, 'gDark', [[1223, 530], [1289, 530]], [[1235, 530, 'N'], [1276, 530, 'I']],
  '<path d="M1248 537h17" stroke="#10c860" stroke-width="4"/><path d="M1248 525v14m17-9v9m-19-7l2 2 2-2m13 0l2 2 2-2" stroke="#333" fill="none"/><g font-family="Liberation Sans" font-size="7" font-weight="bold"><text x="1252" y="524">min</text><text x="1260" y="529">max</text></g>');
out += node(1223, 550, 62, 44, 'gDark', [[1222, 562], [1222, 582], [1287, 572]], [[1234, 562, 'A'], [1234, 582, 'B'], [1274, 572, 'I']],
  '<path d="M1249 579h11" stroke="#10c850" stroke-width="5"/><path d="M1245 579h20m-16-11v14m11-14v14m-13-7l2 2 2-2m7 0l2 2 2-2" stroke="#111" fill="none"/><g font-family="Liberation Sans" font-size="9"><text x="1249" y="568">0</text><text x="1260" y="568">1</text></g>');
out += node(1327, 498, 65, 64, 'gDark', [[1326, 511], [1326, 530], [1326, 550], [1394, 516], [1394, 546]], [[1338, 510, 'V'], [1338, 530, 'S'], [1338, 550, 'T'], [1379, 515, 'R'], [1379, 545, 'C']],
  '<path d="M1349 524h17l-5 8v3h-7v-3z" fill="#10c468" stroke="#056"/><path d="M1348 520h19v5h-19zM1348 535h21v5h-21z"/><path d="M1350 522h16" stroke="#fff" stroke-width="3" stroke-dasharray="4 2"/><path d="M1349 537h19" stroke="#fff" stroke-width="3" stroke-dasharray="1 1"/>');
out += node(1439, 344, 64, 44, 'gLight', [[1438, 356], [1438, 377], [1505, 366]], [[1450, 356, 'T'], [1450, 376, 'P'], [1490, 366, 'T']],
  '<path d="M1460 372q4-5 3-10h14q0 7 3 10l-4-1-1 3-3-2-3 3-2-3-3 2z" fill="#7a4a1c" stroke="#4a2808"/><ellipse cx="1470" cy="361" rx="7" ry="3" fill="#c89858" stroke="#6a3a10"/><path d="M1465 366v5m3-4v5m4-5v5m3-6v5" stroke="#c08040"/><path d="M1461 370l-1-4m18 4l2-5" stroke="#3a9020" stroke-width="2"/>');
out += node(1553, 380, 63, 28, 'gLight', [[1552, 394], [1618, 394]], [[1563, 394, 'E'], [1603, 394, 'S']],
  '<path d="M1574 385q10 2 11 11h6l-8 7h-9z" fill="#ff8c10" stroke="#5a1c08" stroke-width="1.500"/><path d="M1573 384h2v2h-2zM1573 402h2v2h-2zM1582 402h2v2h-2zM1590 394h2v2h-2z" fill="#fff" stroke="#5a1c08"/>');
out += node(1424, 401, 83, 64, 'gLight', [[1423, 413], [1423, 433], [1423, 453], [1509, 418], [1509, 449]], [[1451, 413, 'G'], [1451, 433, 'C'], [1451, 453, 'F'], [1493, 418, 'G'], [1493, 449, 'X']],
  use('down', 1427, 406, 14) + use('down', 1427, 426, 14) + '<g fill="url(#gOrange)" stroke="#6a2a08" stroke-width="1.500"><circle cx="1474" cy="430" r="7"/><circle cx="1468" cy="437" r="4"/></g>');
out += port(1191, 563) + port(1192, 587) + port(1423, 521) + port(1586, 521);
document.getElementById('graph').innerHTML = out;
```
